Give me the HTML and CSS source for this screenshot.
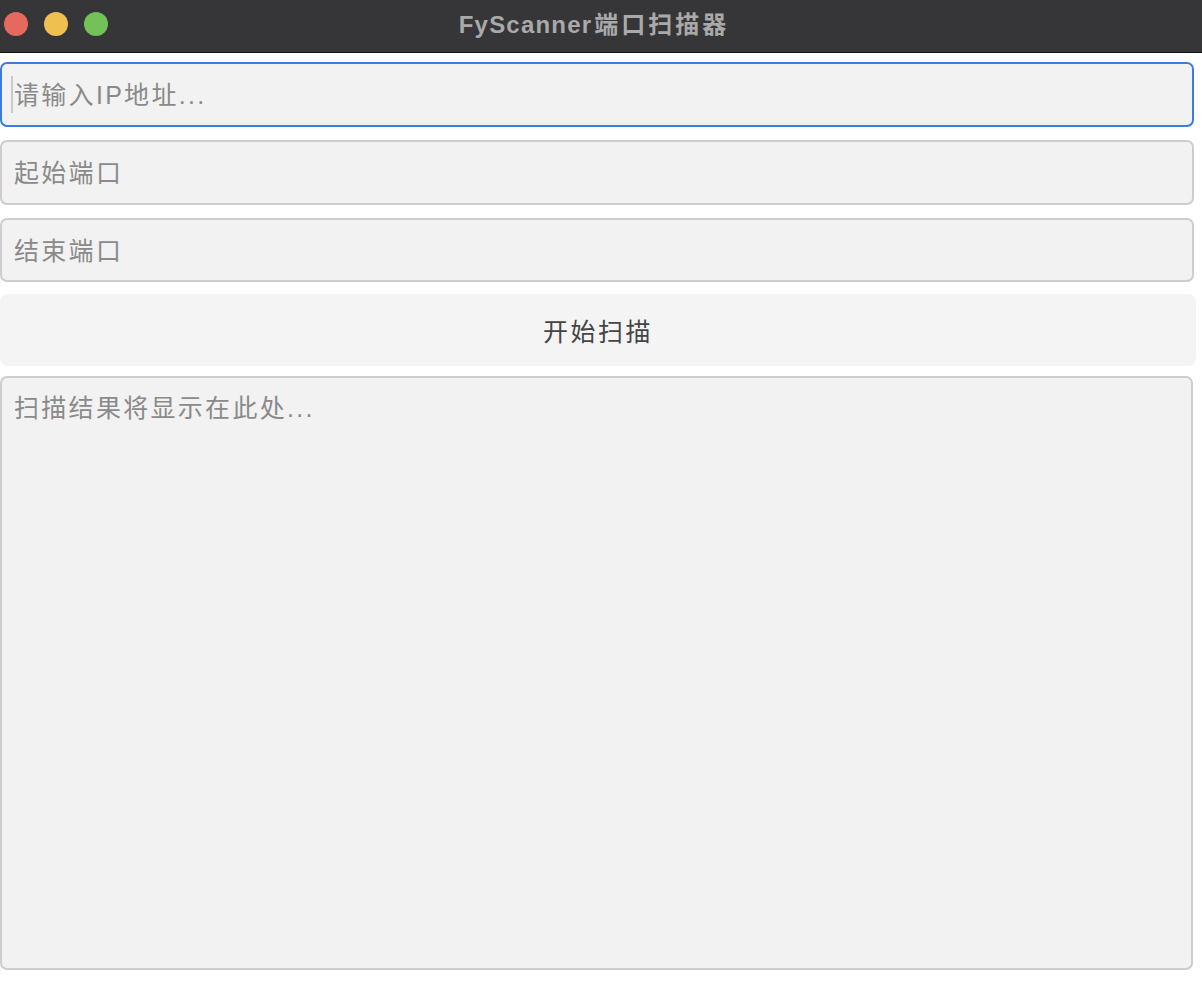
FILE: index.html
```html
<!DOCTYPE html>
<html lang="zh-CN">
<head>
<meta charset="utf-8">
<title>FyScanner端口扫描器</title>
<link rel="stylesheet" href="styles.css">
</head>
<body>
<div class="window">
  <header class="titlebar">
    <div class="lights">
      <span class="light light-close"></span>
      <span class="light light-min"></span>
      <span class="light light-max"></span>
    </div>
    <div class="title"><span class="title-latin">FyScanner</span><span class="title-cjk">端口扫描器</span></div>
    <div class="spacer"></div>
  </header>
  <main class="form">
    <div class="field field-focused">
      <input class="input" type="text" placeholder="请输入IP地址...">
      <span class="caret"></span>
    </div>
    <div class="field">
      <input class="input" type="text" placeholder="起始端口">
    </div>
    <div class="field field-last">
      <input class="input" type="text" placeholder="结束端口">
    </div>
    <button class="scan-btn" type="button">开始扫描</button>
    <textarea class="output" placeholder="扫描结果将显示在此处..."></textarea>
  </main>
</div>
</body>
</html>
```
FILE: styles.css
```css
* { box-sizing: border-box; }
html, body {
  margin: 0;
  padding: 0;
  background: #ffffff;
}
body {
  width: 1202px;
  height: 988px;
  overflow: hidden;
  font-family: "Liberation Sans", "Noto Sans CJK SC", sans-serif;
}
.window {
  display: flex;
  flex-direction: column;
  height: 988px;
}
.titlebar {
  height: 53px;
  background: #363638;
  border-bottom: 1px solid #141414;
  display: grid;
  grid-template-columns: 1fr auto 1fr;
  align-items: center;
  padding-bottom: 5px;
}
.lights {
  display: flex;
  gap: 16px;
  padding-left: 4px;
}
.light {
  width: 24px;
  height: 24px;
  border-radius: 50%;
  display: block;
}
.light-close { background: #e5695c; }
.light-min { background: #efbf4f; }
.light-max { background: #74c157; }
.title {
  color: #a9a9a9;
  font-weight: bold;
  font-size: 24px;
  line-height: 30px;
  margin-right: 14px;
  white-space: nowrap;
}
.title-latin { letter-spacing: 1.2px; }
.title-cjk {
  font-family: "Noto Sans CJK SC", sans-serif;
  letter-spacing: 3px;
  margin-left: 2px;
}
.form {
  display: flex;
  flex-direction: column;
  padding-top: 9px;
}
.field {
  position: relative;
  width: 1194px;
  height: 65px;
  margin-bottom: 13px;
}
.field-last {
  height: 64px;
  margin-bottom: 12px;
}
.input {
  width: 100%;
  height: 100%;
  margin: 0;
  background: #f2f2f2;
  border: 2px solid #cdcdcd;
  border-radius: 7px;
  padding: 2px 12px 0;
  font-family: "Liberation Sans", "Noto Sans CJK SC", sans-serif;
  font-size: 25px;
  letter-spacing: 2.3px;
  color: #333;
  outline: none;
}
.input::placeholder,
.output::placeholder {
  color: #8a8a8a;
  opacity: 1;
}
.field-focused .input {
  border-color: #3b7ce0;
}
.caret {
  position: absolute;
  left: 11px;
  top: 14px;
  width: 2px;
  height: 37px;
  background: #c9c9c9;
}
.scan-btn {
  flex: none;
  width: 1196px;
  height: 72px;
  margin: 0 0 10px 0;
  border: none;
  border-radius: 8px;
  background: #f4f4f4;
  font-family: "Liberation Sans", "Noto Sans CJK SC", sans-serif;
  font-size: 25px;
  letter-spacing: 2.5px;
  color: #454545;
  padding: 0;
}
.output {
  flex: none;
  width: 1193px;
  height: 594px;
  margin: 0;
  resize: none;
  background: #f2f2f2;
  border: 2px solid #cdcdcd;
  border-radius: 7px;
  padding: 14px 12px;
  font-family: "Liberation Sans", "Noto Sans CJK SC", sans-serif;
  font-size: 25px;
  line-height: 32px;
  letter-spacing: 2.3px;
  color: #333;
  outline: none;
}
```
